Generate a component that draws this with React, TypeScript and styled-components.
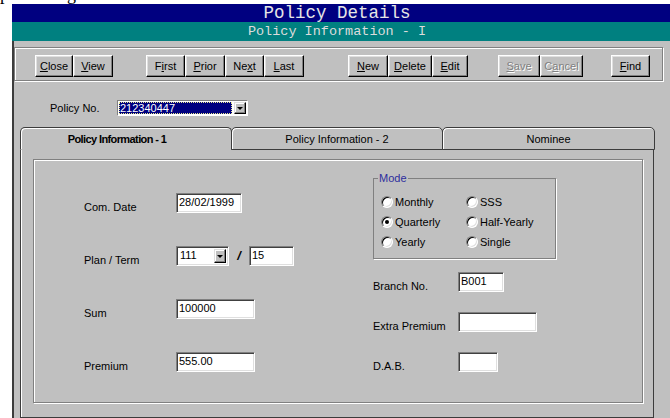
import React from "react";
import styled, { createGlobalStyle, css } from "styled-components";

const GlobalStyle = createGlobalStyle`
  html, body { margin: 0; padding: 0; background: #ffffff; overflow: hidden; }
  body { font-family: "Liberation Sans", Arial, sans-serif; font-size: 11px; color: #000; }
  * { box-sizing: border-box; }
`;

const sans = `"Liberation Sans", Arial, sans-serif`;

const Page = styled.div`
  width: 670px;
  height: 418px;
  overflow: hidden;
  display: flex;
  flex-direction: column;
  background: #fff;
`;

/* descenders of the document line that sits above the window */
const CaptionStrip = styled.div`
  flex: none;
  height: 4px;
  overflow: hidden;
  font-family: "Liberation Serif", "Times New Roman", serif;
  font-size: 18px;
  line-height: 18px;
  color: #000;
`;
const CaptionLine = styled.div`
  display: flex;
  margin-top: -15px;
  white-space: pre;
`;
const CaptionGlyph = styled.span<{ $gap?: number }>`
  margin-left: ${(p) => p.$gap ?? 0}px;
`;

const Window = styled.div`
  flex: 1;
  margin-left: 12px;
  width: 660px;
  display: flex;
  flex-direction: column;
  background: #c0c0c0;
`;

const TitleBar = styled.div<{ $tone: "navy" | "teal" }>`
  flex: none;
  padding-right: 10px;
  text-align: center;
  white-space: pre;
  font-family: "Liberation Mono", "Courier New", monospace;
  ${(p) =>
    p.$tone === "navy"
      ? css`
          height: 18px;
          line-height: 18px;
          font-size: 17.5px;
          background: #000080;
          color: #e6e6e6;
        `
      : css`
          height: 19px;
          line-height: 19px;
          font-size: 13.5px;
          background: #008080;
          color: #dcdcdc;
        `}
`;

const Body = styled.div`
  flex: 1;
  display: flex;
  flex-direction: column;
  border-left: 2px solid #3c3c3c;
  padding-top: 6px;
`;

const Toolbar = styled.div`
  flex: none;
  width: 649px;
  height: 34px;
  display: flex;
  align-items: flex-start;
  padding: 7px 0 0 20px;
  border: 1px solid #808080;
  box-shadow: inset 1px 1px 0 #fff, 1px 1px 0 #fff;
`;

const ButtonGroup = styled.div<{ $offset?: number }>`
  display: flex;
  margin-left: ${(p) => p.$offset ?? 0}px;
`;

const ToolButton = styled.button<{ $w: number }>`
  width: ${(p) => p.$w}px;
  height: 22px;
  margin: 0;
  padding: 0 0 1px;
  font: 11px ${sans};
  color: #000;
  background: #c0c0c0;
  border: 1px solid;
  border-color: #fff #000 #000 #fff;
  box-shadow: inset -1px -1px 0 #808080, inset 1px 1px 0 #dfdfdf;
  &:disabled {
    color: #808080;
    text-shadow: 1px 1px 0 #fff;
  }
`;

const PolicyRow = styled.div`
  flex: none;
  height: 16px;
  margin-top: 19px;
  padding-left: 36px;
  display: flex;
  align-items: center;
`;

const PolicyLabel = styled.span`
  width: 67px;
  font: 11px ${sans};
  line-height: 13px;
`;

const PolicyCombo = styled.div`
  width: 131px;
  height: 16px;
  display: flex;
  align-items: stretch;
  padding: 1px;
  background: #fff;
  border: 1px solid;
  border-color: #808080 #fff #fff #808080;
`;

const SelectedValue = styled.div`
  flex: 1;
  margin-right: 2px;
  padding-left: 1px;
  background: #000080;
  color: #fff;
  font: 11px ${sans};
  line-height: 12px;
  outline: 1px dotted #e8e890;
  outline-offset: -1px;
`;

const DropButton = styled.div<{ $w: number }>`
  flex: none;
  width: ${(p) => p.$w}px;
  display: flex;
  align-items: center;
  justify-content: center;
  background: #c0c0c0;
  border: 1px solid;
  border-color: #dfdfdf #000 #000 #dfdfdf;
  box-shadow: inset -1px -1px 0 #808080, inset 1px 1px 0 #fff;
  &::after {
    content: "";
    border-left: 3px solid transparent;
    border-right: 3px solid transparent;
    border-top: 3px solid #000;
    margin-top: 1px;
  }
`;

const TabStrip = styled.div`
  flex: none;
  height: 23px;
  margin: 11px 0 0 6px;
  display: flex;
`;

const Tab = styled.div<{ $active?: boolean; $w: number }>`
  width: ${(p) => p.$w}px;
  height: 23px;
  margin-left: -1px;
  display: flex;
  align-items: center;
  justify-content: center;
  font: 11px ${sans};
  border: 1px solid #3c3c3c;
  border-radius: 5px 5px 0 0;
  box-shadow: inset 1px 1px 0 #fff;
  &:first-child {
    margin-left: 0;
  }
  ${(p) =>
    p.$active &&
    css`
      border-bottom-color: transparent;
      font-weight: bold;
      letter-spacing: -0.6px;
      padding-right: 18px;
    `}
`;

const TabPanel = styled.div`
  flex: 1;
  width: 634px;
  margin-left: 6px;
  display: flex;
  padding: 9px 10px 14px 12px;
  border: 1px solid #3c3c3c;
  border-top: none;
  box-shadow: inset 1px 0 0 #fff;
`;

const Frame = styled.div`
  flex: 1;
  display: flex;
  border: 1px solid #808080;
  box-shadow: inset 1px 1px 0 #fff, 1px 1px 0 #fff;
`;

const Column = styled.div<{ $w?: number; $top: number; $left?: number; $gap?: number }>`
  ${(p) => (p.$w ? `width: ${p.$w}px; flex: none;` : "flex: 1;")}
  padding-top: ${(p) => p.$top}px;
  padding-left: ${(p) => p.$left ?? 0}px;
  display: flex;
  flex-direction: column;
  align-items: flex-start;
  gap: ${(p) => p.$gap ?? 0}px;
`;

const FieldRow = styled.div<{ $mt?: number }>`
  height: 20px;
  margin-top: ${(p) => p.$mt ?? 0}px;
  display: flex;
  align-items: flex-start;
`;

const FieldLabel = styled.span<{ $w: number }>`
  width: ${(p) => p.$w}px;
  padding-top: 8px;
  font: 11px ${sans};
  line-height: 13px;
  white-space: nowrap;
`;

const sunken = css`
  background: #fff;
  border: 1px solid;
  border-color: #808080 #fff #fff #808080;
  box-shadow: inset 1px 1px 0 #404040, inset -1px -1px 0 #dfdfdf;
`;

const TextBox = styled.input<{ $w: number }>`
  width: ${(p) => p.$w}px;
  height: 20px;
  margin: 0;
  padding: 0 0 3px 2px;
  font: 11px ${sans};
  color: #000;
  outline: none;
  ${sunken}
`;

const PlanCombo = styled.div`
  width: 53px;
  height: 20px;
  display: flex;
  padding: 2px;
  ${sunken}
`;

const PlanValue = styled.span`
  flex: 1;
  font: 11px ${sans};
  line-height: 12px;
  padding-left: 1px;
`;

const Slash = styled.span`
  width: 20px;
  text-align: center;
  font: italic bold 13px ${sans};
  line-height: 20px;
`;

const ModeBox = styled.fieldset`
  width: 183px;
  margin: 0;
  padding: 7px 0 6px 7px;
  border: 1px solid #808080;
  box-shadow: 1px 1px 0 #fff;
  display: grid;
  grid-template-columns: 85px auto;
  grid-auto-rows: 20px;
  align-items: center;
`;

const ModeLegend = styled.legend`
  margin-left: -3px;
  padding: 0 1px;
  font: 11px ${sans};
  line-height: 13px;
  color: #2e2e9e;
`;

const RadioOption = styled.label`
  display: flex;
  align-items: center;
  gap: 2px;
  font: 11px ${sans};
  line-height: 13px;
  white-space: nowrap;
`;

const RadioDot = styled.span<{ $on?: boolean }>`
  flex: none;
  width: 12px;
  height: 12px;
  border-radius: 50%;
  background: #fff;
  border: 1px solid;
  border-color: #808080 #fff #fff #808080;
  box-shadow: inset 1px 1px 0 #000, inset -1px -1px 0 #dfdfdf;
  display: flex;
  align-items: center;
  justify-content: center;
  &::after {
    content: "";
    width: 4px;
    height: 4px;
    border-radius: 50%;
    background: ${(p) => (p.$on ? "#000" : "transparent")};
  }
`;

type Btn = { label: string; key: number; w: number; disabled?: boolean };

const toolbar: { offset: number; buttons: Btn[] }[] = [
  { offset: 0, buttons: [{ label: "Close", key: 0, w: 38 }, { label: "View", key: 0, w: 40 }] },
  {
    offset: 33,
    buttons: [
      { label: "First", key: 1, w: 39 },
      { label: "Prior", key: 0, w: 40 },
      { label: "Next", key: 2, w: 39 },
      { label: "Last", key: 0, w: 40 },
    ],
  },
  {
    offset: 44,
    buttons: [
      { label: "New", key: 0, w: 40 },
      { label: "Delete", key: 0, w: 44 },
      { label: "Edit", key: 0, w: 36 },
    ],
  },
  {
    offset: 30,
    buttons: [
      { label: "Save", key: 0, w: 42, disabled: true },
      { label: "Cancel", key: 1, w: 43, disabled: true },
    ],
  },
  { offset: 28, buttons: [{ label: "Find", key: 0, w: 39 }] },
];

const modes = [
  ["Monthly", "SSS"],
  ["Quarterly", "Half-Yearly"],
  ["Yearly", "Single"],
];

function AccessLabel({ label, index }: { label: string; index: number }) {
  return (
    <>
      {label.slice(0, index)}
      <u>{label[index]}</u>
      {label.slice(index + 1)}
    </>
  );
}

export default function App() {
  return (
    <Page>
      <GlobalStyle />
      <CaptionStrip>
        <CaptionLine>
          <CaptionGlyph>p</CaptionGlyph>
          <CaptionGlyph $gap={58}>g</CaptionGlyph>
        </CaptionLine>
      </CaptionStrip>
      <Window>
        <TitleBar $tone="navy">Policy Details</TitleBar>
        <TitleBar $tone="teal">Policy Information - I</TitleBar>
        <Body>
          <Toolbar>
            {toolbar.map((group, gi) => (
              <ButtonGroup key={gi} $offset={group.offset}>
                {group.buttons.map((b) => (
                  <ToolButton key={b.label} $w={b.w} disabled={b.disabled}>
                    <AccessLabel label={b.label} index={b.key} />
                  </ToolButton>
                ))}
              </ButtonGroup>
            ))}
          </Toolbar>

          <PolicyRow>
            <PolicyLabel>Policy No.</PolicyLabel>
            <PolicyCombo>
              <SelectedValue>212340447</SelectedValue>
              <DropButton $w={12} />
            </PolicyCombo>
          </PolicyRow>

          <TabStrip>
            <Tab $active $w={212}>Policy Information - 1</Tab>
            <Tab $w={212}>Policy Information - 2</Tab>
            <Tab $w={213}>Nominee</Tab>
          </TabStrip>

          <TabPanel>
            <Frame>
              <Column $w={339} $top={33} $left={50} $gap={33}>
                <FieldRow>
                  <FieldLabel $w={92}>Com. Date</FieldLabel>
                  <TextBox $w={66} readOnly value="28/02/1999" />
                </FieldRow>
                <FieldRow>
                  <FieldLabel $w={92}>Plan / Term</FieldLabel>
                  <PlanCombo>
                    <PlanValue>111</PlanValue>
                    <DropButton $w={12} />
                  </PlanCombo>
                  <Slash>/</Slash>
                  <TextBox $w={45} readOnly value="15" />
                </FieldRow>
                <FieldRow>
                  <FieldLabel $w={92}>Sum</FieldLabel>
                  <TextBox $w={79} readOnly value="100000" />
                </FieldRow>
                <FieldRow>
                  <FieldLabel $w={92}>Premium</FieldLabel>
                  <TextBox $w={79} readOnly value="555.00" />
                </FieldRow>
              </Column>

              <Column $top={12}>
                <ModeBox>
                  <ModeLegend>Mode</ModeLegend>
                  {modes.flat().map((m) => (
                    <RadioOption key={m}>
                      <RadioDot $on={m === "Quarterly"} />
                      {m}
                    </RadioOption>
                  ))}
                </ModeBox>
                <FieldRow $mt={13}>
                  <FieldLabel $w={85}>Branch No.</FieldLabel>
                  <TextBox $w={46} readOnly value="B001" />
                </FieldRow>
                <FieldRow $mt={20}>
                  <FieldLabel $w={85}>Extra Premium</FieldLabel>
                  <TextBox $w={79} readOnly value="" />
                </FieldRow>
                <FieldRow $mt={20}>
                  <FieldLabel $w={85}>D.A.B.</FieldLabel>
                  <TextBox $w={40} readOnly value="" />
                </FieldRow>
              </Column>
            </Frame>
          </TabPanel>
        </Body>
      </Window>
    </Page>
  );
}
